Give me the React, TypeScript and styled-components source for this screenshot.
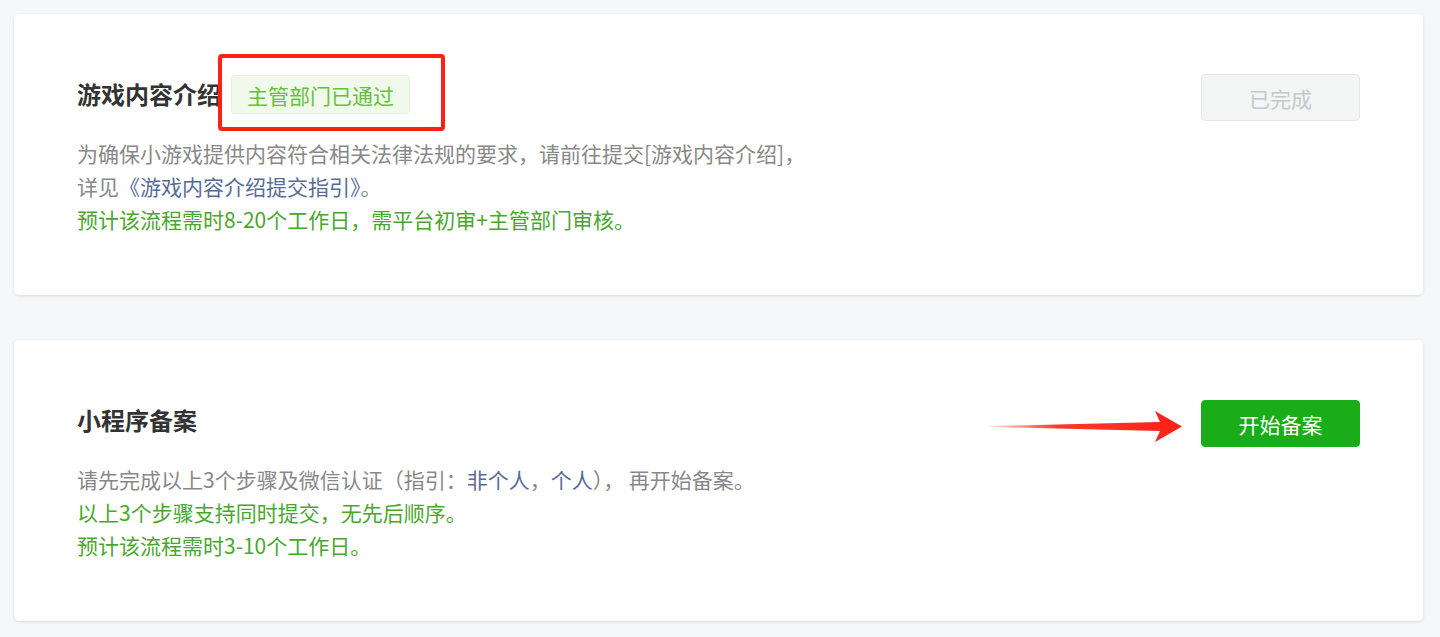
import React from "react";
import styled, { createGlobalStyle } from "styled-components";

const GlobalStyle = createGlobalStyle`
  body {
    margin: 0;
    background: #f6f7f9;
    font-family: "Noto Sans CJK SC", "Noto Sans", sans-serif;
  }
`;

const Page = styled.div`
  display: flex;
  flex-direction: column;
  gap: 45px;
  padding: 14px 17px 14px 14px;
`;

const Card = styled.section`
  background: #fff;
  border-radius: 5px;
  box-shadow: 0 1px 3px rgba(0, 0, 0, 0.12);
  padding: 60px 63px 59px;
`;

const Header = styled.div`
  display: flex;
  align-items: center;
  justify-content: space-between;
  height: 47px;
  position: relative;
`;

const TitleGroup = styled.div`
  display: flex;
  align-items: center;
  margin-top: -7px;
`;

const Title = styled.h2`
  margin: 0;
  font-size: 24px;
  font-weight: 700;
  color: #333;
  line-height: 32px;
`;

const TagWrap = styled.div`
  position: relative;
  margin-left: 10px;
  margin-top: 1px;
`;

const Tag = styled.span`
  display: inline-flex;
  align-items: center;
  height: 37px;
  padding: 0 15px;
  background: #f0f9eb;
  border: 1px solid #e1f3d8;
  border-radius: 4px;
  color: #67c23a;
  font-size: 21px;
`;

const Highlight = styled.div`
  position: absolute;
  left: -13px;
  top: -21px;
  right: -35px;
  bottom: -17px;
  border: 4px solid #ff2016;
  border-radius: 4px;
  pointer-events: none;
`;

const Button = styled.button<{ $done?: boolean }>`
  width: 159px;
  height: 47px;
  border-radius: 4px;
  font-family: inherit;
  font-size: 21px;
  border: 1px solid ${(p) => (p.$done ? "#e4e8eb" : "#1aad19")};
  background: ${(p) => (p.$done ? "#f4f5f5" : "#1aad19")};
  color: ${(p) => (p.$done ? "#c6c9cc" : "#fff")};
  cursor: ${(p) => (p.$done ? "default" : "pointer")};
`;

const Arrow = styled.svg`
  position: absolute;
  right: 175px;
  top: 10px;
`;

const Desc = styled.div`
  margin-top: 16px;
  font-size: 21px;
  line-height: 33px;
  color: #888;
`;

const Line = styled.div<{ $green?: boolean }>`
  color: ${(p) => (p.$green ? "#4aa72e" : "#888")};
`;

const Link = styled.a`
  color: #576b95;
  text-decoration: none;
`;

const RedArrow = () => (
  <Arrow width="195" height="34" viewBox="0 0 195 34">
    <defs>
      <linearGradient id="tail" x1="0" y1="0" x2="1" y2="0">
        <stop offset="0" stopColor="#ff2116" stopOpacity="0.15" />
        <stop offset="0.35" stopColor="#ff2116" stopOpacity="0.9" />
        <stop offset="1" stopColor="#ff2116" />
      </linearGradient>
    </defs>
    <polygon
      points="0,16 170,12 165,1 192,16.5 165,32 170,21 0,17"
      fill="url(#tail)"
    />
  </Arrow>
);

export default function App() {
  return (
    <>
      <GlobalStyle />
      <Page>
        <Card>
          <Header>
            <TitleGroup>
              <Title>游戏内容介绍</Title>
              <TagWrap>
                <Tag>主管部门已通过</Tag>
                <Highlight />
              </TagWrap>
            </TitleGroup>
            <Button $done>已完成</Button>
          </Header>
          <Desc>
            <Line>为确保小游戏提供内容符合相关法律法规的要求，请前往提交[游戏内容介绍]，</Line>
            <Line>
              详见<Link href="#">《游戏内容介绍提交指引》</Link>。
            </Line>
            <Line $green>预计该流程需时8-20个工作日，需平台初审+主管部门审核。</Line>
          </Desc>
        </Card>
        <Card>
          <Header>
            <TitleGroup>
              <Title>小程序备案</Title>
            </TitleGroup>
            <RedArrow />
            <Button>开始备案</Button>
          </Header>
          <Desc>
            <Line>
              请先完成以上3个步骤及微信认证（指引：<Link href="#">非个人</Link>，
              <Link href="#">个人</Link>）， 再开始备案。
            </Line>
            <Line $green>以上3个步骤支持同时提交，无先后顺序。</Line>
            <Line $green>预计该流程需时3-10个工作日。</Line>
          </Desc>
        </Card>
      </Page>
    </>
  );
}
